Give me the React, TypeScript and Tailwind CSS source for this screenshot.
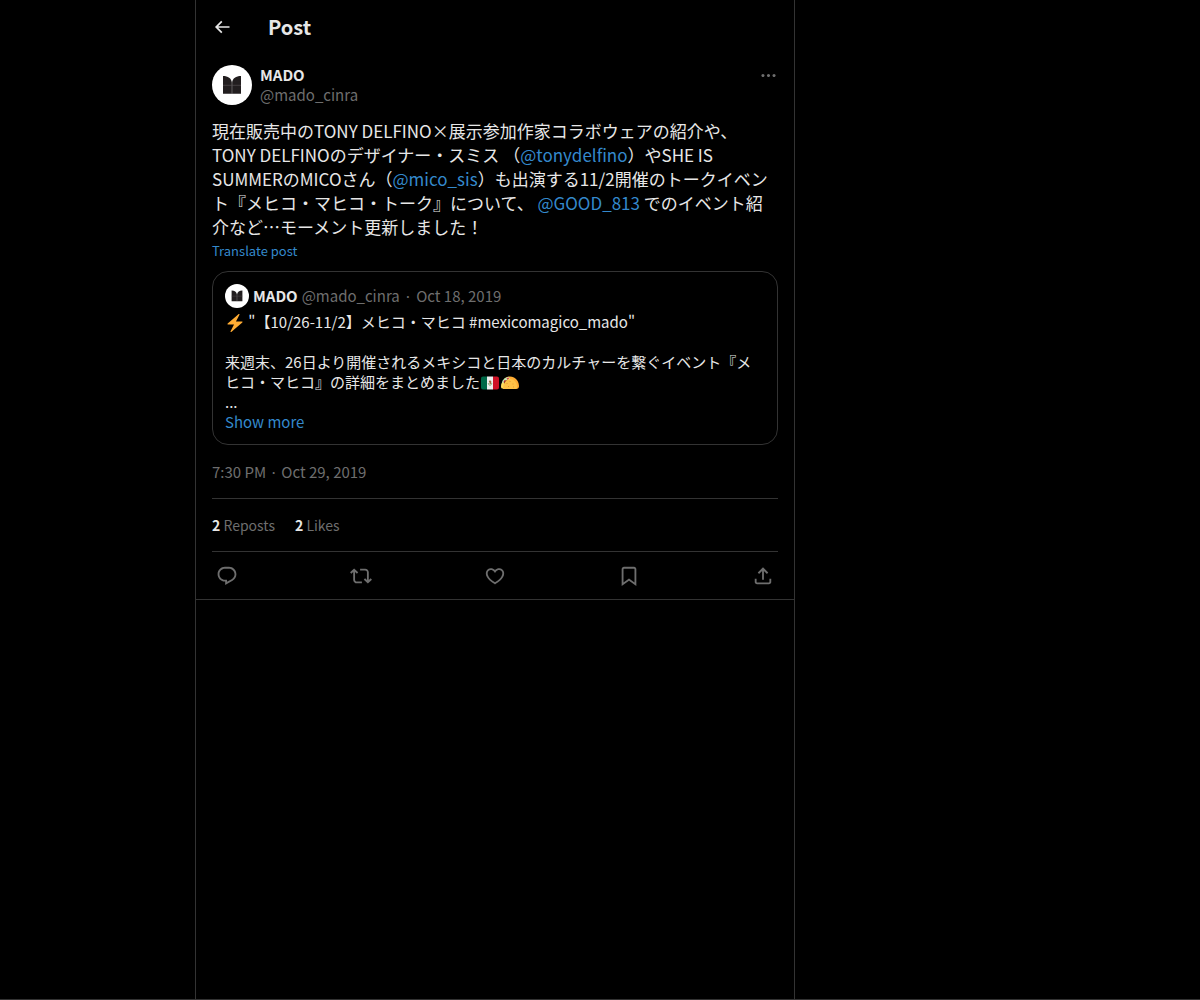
import type { ReactNode } from 'react'

const icons = {
    back: 'M7.414 13l5.043 5.04-1.414 1.42L3.586 12l7.457-7.46 1.414 1.42L7.414 11H21v2H7.414z',
    more: 'M3 12c0-1.1.9-2 2-2s2 .9 2 2-.9 2-2 2-2-.9-2-2zm9 2c1.1 0 2-.9 2-2s-.9-2-2-2-2 .9-2 2 .9 2 2 2zm7 0c1.1 0 2-.9 2-2s-.9-2-2-2-2 .9-2 2 .9 2 2 2z',
    reply: 'M1.751 10c0-4.42 3.584-8 8.005-8h4.366c4.49 0 8.129 3.64 8.129 8.13 0 2.96-1.607 5.68-4.196 7.11l-8.054 4.46v-3.69h-.067c-4.49.1-8.183-3.51-8.183-8.01zm8.005-6c-3.317 0-6.005 2.69-6.005 6 0 3.37 2.77 6.08 6.138 6.01l.351-.01h1.761v2.3l5.087-2.81c1.951-1.08 3.163-3.13 3.163-5.36 0-3.39-2.744-6.13-6.129-6.13H9.756z',
    repost: 'M4.5 3.88l4.432 4.14-1.364 1.46L5.5 7.55V16c0 1.1.896 2 2 2H13v2H7.5c-2.209 0-4-1.79-4-4V7.55L1.432 9.48.068 8.02 4.5 3.88zM16.5 6H11V4h5.5c2.209 0 4 1.79 4 4v8.45l2.068-1.93 1.364 1.46-4.432 4.14-4.432-4.14 1.364-1.46 2.068 1.93V8c0-1.1-.896-2-2-2z',
    like: 'M16.697 5.5c-1.222-.06-2.679.51-3.89 2.16l-.805 1.09-.806-1.09C9.984 6.01 8.526 5.44 7.304 5.5c-1.243.07-2.349.78-2.91 1.91-.552 1.12-.633 2.78.479 4.82 1.074 1.97 3.257 4.27 7.129 6.61 3.87-2.34 6.052-4.64 7.126-6.61 1.111-2.04 1.03-3.7.477-4.82-.561-1.13-1.666-1.84-2.908-1.91zm4.187 7.69c-1.351 2.48-4.001 5.12-8.379 7.67l-.503.3-.504-.3c-4.379-2.55-7.029-5.19-8.382-7.67-1.36-2.5-1.41-4.86-.514-6.67.887-1.79 2.647-2.91 4.601-3.01 1.651-.09 3.368.56 4.798 2.01 1.429-1.45 3.146-2.1 4.796-2.01 1.954.1 3.714 1.22 4.601 3.01.896 1.81.846 4.17-.514 6.67z',
    bookmark: 'M4 4.5C4 3.12 5.119 2 6.5 2h11C18.881 2 20 3.12 20 4.5v18.44l-8-5.71-8 5.71V4.5zM6.5 4c-.276 0-.5.22-.5.5v14.56l6-4.29 6 4.29V4.5c0-.28-.224-.5-.5-.5h-11z',
    share: 'M12 2.59l5.7 5.7-1.41 1.42L13 6.41V16h-2V6.41l-3.3 3.3-1.41-1.42L12 2.59zM21 15l-.02 3.51c0 1.38-1.12 2.49-2.5 2.49H5.5C4.11 21 3 19.88 3 18.5V15h2v3.5c0 .28.22.5.5.5h12.98c.28 0 .5-.22.5-.5L19 15h2z',
}

const Icon = ({ d, className }: { d: string; className: string }) => (
    <svg viewBox="0 0 24 24" fill="currentColor" className={className} aria-hidden="true">
        <path d={d} />
    </svg>
)

const Avatar = ({ className }: { className: string }) => (
    <svg viewBox="0 0 40 40" className={className} role="img" aria-label="MADO">
        <circle cx="20" cy="20" r="20" fill="#fff" />
        <path d="M11 11C16 11 19.4 13.4 19.9 17.4V28.8H11zM29 11C24 11 20.6 13.4 20.1 17.4V28.8H29z" fill="#221e1f" />
        <path d="M11 20.3H29M20 17V28.8" stroke="#5c5859" strokeWidth="0.6" />
    </svg>
)

const Mention = ({ children }: { children: ReactNode }) => (
    <a href="#" className="text-[#3489cc]">{children}</a>
)

const Bolt = () => (
    <svg viewBox="0 0 36 36" className="mx-px inline-block size-[18px] align-[-4px]" role="img" aria-label="⚡">
        <path fill="#FFAC33" d="M32.938 15.651C32.792 15.26 32.418 15 32 15H19.925L26.89 1.458c.219-.426.106-.947-.271-1.243C26.437.071 26.218 0 26 0c-.233 0-.466.082-.653.243L18 6.588 3.347 19.243c-.316.273-.43.714-.284 1.105S3.582 21 4 21h12.075L9.11 34.542c-.219.426-.106.947.271 1.243.182.144.401.215.619.215.233 0 .466-.082.653-.243L18 29.412l14.653-12.655c.317-.273.43-.714.285-1.106z" />
    </svg>
)

const MexicoFlag = () => (
    <svg viewBox="0 0 36 36" className="mx-px inline-block size-[18px] align-[-4px]" role="img" aria-label="🇲🇽">
        <path fill="#006847" d="M4 5C1.791 5 0 6.791 0 9v18c0 2.209 1.791 4 4 4h8V5H4z" />
        <path fill="#EEE" d="M12 5h12v26H12z" />
        <path fill="#CE1126" d="M32 5h-8v26h8c2.209 0 4-1.791 4-4V9c0-2.209-1.791-4-4-4z" />
        <path d="M14.5 18c0 6 7 6 7 0" fill="none" stroke="#5c9e4f" strokeWidth="1.4" />
        <path d="M15.5 14.5l2.5-2 2.5 2v3.5l-1.5 2.5h-2.4l.8-2.5z" fill="#9a6b3f" />
    </svg>
)

const Taco = () => (
    <svg viewBox="0 0 36 36" className="mx-px inline-block size-[18px] align-[-4px]" role="img" aria-label="🌮">
        <path fill="#FFAC33" d="M8 9C12 4 20 4 26 7c6 3 10 10 10 17 0 4-2 6-6 6H14z" />
        <path fill="#C6E5B1" d="M1 23C1 13 7 6 15 6l3 4L6 27z" />
        <path fill="#DD2E44" d="M5 16l2-4 3 1-3 5zM11 9l4-2 1 3-3 1z" />
        <path fill="#662113" d="M4 20l4-6 6-3 1 3-9 12z" />
        <path fill="#FFDC5D" d="M0 25c0-3 1-6 3-8l3 1v11H3c-2 0-3-1-3-4z" />
        <path fill="#FFC247" d="M4 30C4 19 10 10 18 10c8 0 14 7 14 16 0 3-1 4-4 4z" />
        <path fill="#E89A2E" d="M11 18h2v2h-2zM17 14h2v2h-2zM23 19h2v2h-2zM14 24h2v2h-2zM24 25h2v2h-2z" />
    </svg>
)

const QuotedPost = () => {
    return (
        <div className="mt-3 rounded-2xl border border-[#333333] p-3 text-[15px] leading-5">
            <div className="flex items-center">
                <Avatar className="mr-1 size-6" />
                <span className="font-bold">MADO</span>
                <span className="ml-1 text-[#6e6e6e]">@mado_cinra</span>
                <span className="px-1 text-[#6e6e6e]">·</span>
                <time className="text-[#6e6e6e]">Oct 18, 2019</time>
            </div>
            <div className="mt-1">
                <Bolt /> "【10/26-11/2】メヒコ・マヒコ #mexicomagico_mado"
                <br />
                <br />
                来週末、26日より開催されるメキシコと日本のカルチャーを繋ぐイベント『メヒコ・マヒコ』の詳細をまとめました<MexicoFlag /><Taco />
                <br />
                ...
            </div>
            <a href="#" className="block text-[#3489cc]">Show more</a>
        </div>
    )
}

const actions = [
    { label: 'Reply', d: icons.reply },
    { label: 'Repost', d: icons.repost },
    { label: 'Like', d: icons.like },
    { label: 'Bookmark', d: icons.bookmark },
    { label: 'Share', d: icons.share },
]

const App = () => {
    return (
        <div lang="ja" className="flex min-h-screen border-b border-[#333333] bg-black pl-[195px] font-['Noto_Sans_CJK_JP',sans-serif] text-[#e7e7e7]">
            <main className="w-full max-w-[600px] border-x border-[#333333]">
                <header className="flex h-[53px] items-center px-4">
                    <button type="button" aria-label="Back" className="w-14">
                        <Icon d={icons.back} className="size-5" />
                    </button>
                    <h1 className="text-xl font-bold">Post</h1>
                </header>
                <article className="border-b border-[#333333] px-4 pt-3">
                    <div className="flex">
                        <Avatar className="mr-2 size-10" />
                        <div className="grow text-[15px] leading-5">
                            <div className="font-bold">MADO</div>
                            <div className="text-[#6e6e6e]">@mado_cinra</div>
                        </div>
                        <button type="button" aria-label="More" className="h-5 text-[#6e6e6e]">
                            <Icon d={icons.more} className="size-[19px]" />
                        </button>
                    </div>
                    <p className="mt-[14px] text-[17px] leading-6">
                        現在販売中のTONY DELFINO×展示参加作家コラボウェアの紹介や、TONY DELFINOのデザイナー・スミス （<Mention>@tonydelfino</Mention>）やSHE IS SUMMERのMICOさん（<Mention>@mico_sis</Mention>）も出演する11/2開催のトークイベント『メヒコ・マヒコ・トーク』について、 <Mention>@GOOD_813</Mention> でのイベント紹介など…モーメント更新しました！
                    </p>
                    <button type="button" className="mt-1 block text-[13px] leading-4 text-[#3489cc]">Translate post</button>
                    <QuotedPost />
                    <div className="pt-[17px] pb-4 text-[15px] leading-5 text-[#6e6e6e]">
                        <time>7:30 PM · Oct 29, 2019</time>
                    </div>
                    <div className="flex gap-5 border-y border-[#333333] py-4 text-sm leading-5 text-[#6e6e6e]">
                        <span><b className="text-[#e7e7e7]">2</b> Reposts</span>
                        <span><b className="text-[#e7e7e7]">2</b> Likes</span>
                    </div>
                    <div className="flex h-[47px] items-center justify-between px-1 text-[#6e6e6e]">
                        {actions.map(({ label, d }) => (
                            <button key={label} type="button" aria-label={label}>
                                <Icon d={d} className="size-[22px]" />
                            </button>
                        ))}
                    </div>
                </article>
            </main>
        </div>
    )
}

export default App
